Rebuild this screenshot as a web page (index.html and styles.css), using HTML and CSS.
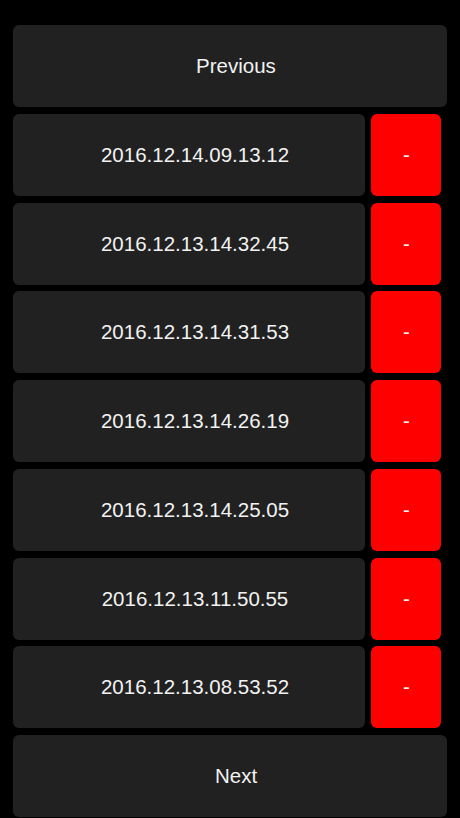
FILE: index.html
```html
<!DOCTYPE html>
<html>
	<head>
		<meta charset="UTF-8">
		<title>Backups</title>
		<link rel="stylesheet" href="styles.css">
	</head>
	<body>
		<div class="page">
			<div class="btn btn-wide">Previous</div>
			<ul class="list">
				<li class="row">
					<div class="btn btn-date">2016.12.14.09.13.12</div>
					<div class="btn btn-del">-</div>
				</li>
				<li class="row">
					<div class="btn btn-date">2016.12.13.14.32.45</div>
					<div class="btn btn-del">-</div>
				</li>
				<li class="row">
					<div class="btn btn-date">2016.12.13.14.31.53</div>
					<div class="btn btn-del">-</div>
				</li>
				<li class="row">
					<div class="btn btn-date">2016.12.13.14.26.19</div>
					<div class="btn btn-del">-</div>
				</li>
				<li class="row">
					<div class="btn btn-date">2016.12.13.14.25.05</div>
					<div class="btn btn-del">-</div>
				</li>
				<li class="row">
					<div class="btn btn-date">2016.12.13.11.50.55</div>
					<div class="btn btn-del">-</div>
				</li>
				<li class="row">
					<div class="btn btn-date">2016.12.13.08.53.52</div>
					<div class="btn btn-del">-</div>
				</li>
			</ul>
			<div class="btn btn-wide">Next</div>
		</div>
	</body>
</html>
```

FILE: styles.css
```css
html,
body {
	margin: 0;
	padding: 0;
	background: #000;
}

body {
	font-family: "Liberation Sans", Arial, sans-serif;
	font-size: 20.5px;
	color: #f2f2f2;
}

.page {
	padding: 25px 13px 0 13px;
	display: flex;
	flex-direction: column;
	gap: 6.75px;
}

ul {
	margin: 0;
	padding: 0;
	list-style: none;
}

.list {
	display: flex;
	flex-direction: column;
	gap: 6.75px;
}

.row {
	display: flex;
	gap: 6px;
	width: 428px;
}

.btn {
	height: 82px;
	border-radius: 6px;
	background: #212121;
	display: flex;
	align-items: center;
	justify-content: center;
	box-sizing: border-box;
}

.btn-wide {
	width: 434px;
	padding-left: 12px;
}

.btn-date {
	width: 352px;
	padding-left: 12px;
}

.btn-del {
	width: 70px;
	background: #ff0000;
	padding-left: 1px;
}
```
